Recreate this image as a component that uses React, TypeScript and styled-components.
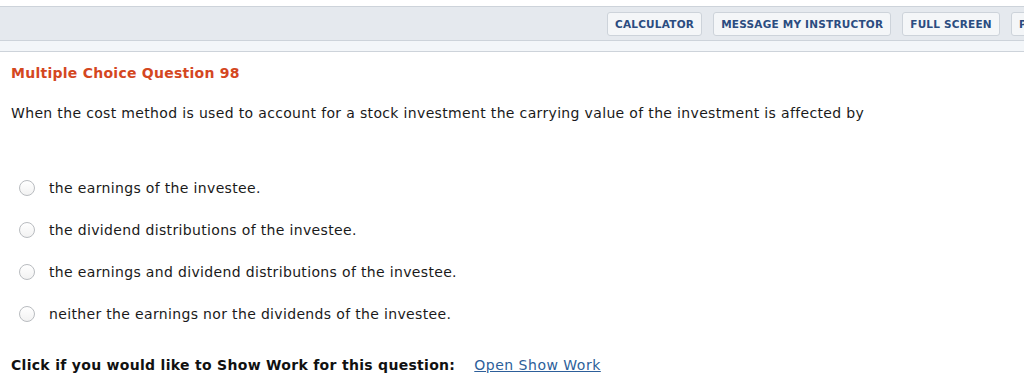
import { createGlobalStyle, styled } from "styled-components";

const GlobalStyle = createGlobalStyle`
  html, body {
    margin: 0;
    padding: 0;
    background: #ffffff;
  }

  body {
    font-family: "DejaVu Sans", Verdana, sans-serif;
    color: #1a1a1a;
    overflow: hidden;
  }
`;

const Page = styled.div`
  width: 1024px;
  height: 389px;
  padding-top: 6px;
  box-sizing: border-box;
  overflow: hidden;
`;

const Toolbar = styled.div`
  height: 33px;
  border-top: 1px solid #cdd3da;
  border-bottom: 1px solid #cdd3da;
  background: #e5e9ee;
  display: flex;
  justify-content: flex-start;
  align-items: center;
  gap: 11px;
  padding-left: 607px;
  overflow: hidden;
`;

const ToolButton = styled.button`
  height: 24px;
  padding: 0 7px;
  border: 1px solid #cdd3da;
  border-radius: 3px;
  background: #f4f6f8;
  color: #2b4c80;
  font-family: "DejaVu Sans", Verdana, sans-serif;
  font-size: 10.5px;
  font-weight: bold;
  letter-spacing: 0.22px;
  text-transform: uppercase;
  cursor: pointer;
  white-space: nowrap;
  flex-shrink: 0;
`;

const SubBar = styled.div`
  height: 10px;
  background: #f3f6f9;
  border-bottom: 1px solid #cdd3da;
`;

const Content = styled.div`
  padding: 12px 11px 0 11px;
`;

const Title = styled.h2`
  margin: 0;
  color: #d4471f;
  font-size: 14px;
  font-weight: bold;
  line-height: 18px;
  letter-spacing: 0.26px;
`;

const Prompt = styled.p`
  margin: 22px 0 0 0;
  font-size: 14px;
  line-height: 18px;
  letter-spacing: 0.34px;
`;

const Choices = styled.ul`
  list-style: none;
  margin: 57px 0 0 0;
  padding: 0;
  display: flex;
  flex-direction: column;
  gap: 24px;
`;

const Choice = styled.li`
  display: flex;
  align-items: center;
  gap: 14px;
  padding-left: 8px;
  font-size: 14px;
  line-height: 18px;
  letter-spacing: 0.34px;
`;

const Radio = styled.span`
  width: 16px;
  height: 16px;
  border-radius: 50%;
  border: 1px solid #b9bcc0;
  background: linear-gradient(#ffffff, #f2f2f2);
  box-sizing: border-box;
  flex-shrink: 0;
`;

const WorkRow = styled.div`
  margin-top: 33px;
  display: flex;
  align-items: center;
  gap: 19px;
  font-size: 14px;
  line-height: 18px;
`;

const WorkLabel = styled.span`
  font-weight: bold;
  color: #111111;
  letter-spacing: 0.3px;
`;

const WorkLink = styled.a`
  color: #2d5f9a;
  text-decoration: underline;
  cursor: pointer;
  letter-spacing: 0.5px;
`;

const choices = [
  "the earnings of the investee.",
  "the dividend distributions of the investee.",
  "the earnings and dividend distributions of the investee.",
  "neither the earnings nor the dividends of the investee.",
];

export default function App() {
  return (
    <Page>
      <GlobalStyle />
      <Toolbar>
        <ToolButton>Calculator</ToolButton>
        <ToolButton>Message my instructor</ToolButton>
        <ToolButton>Full screen</ToolButton>
        <ToolButton>Print</ToolButton>
      </Toolbar>
      <SubBar />
      <Content>
        <Title>Multiple Choice Question 98</Title>
        <Prompt>
          When the cost method is used to account for a stock investment the carrying value of the
          investment is affected by
        </Prompt>
        <Choices>
          {choices.map((text) => (
            <Choice key={text}>
              <Radio />
              {text}
            </Choice>
          ))}
        </Choices>
        <WorkRow>
          <WorkLabel>Click if you would like to Show Work for this question:</WorkLabel>
          <WorkLink>Open Show Work</WorkLink>
        </WorkRow>
      </Content>
    </Page>
  );
}
